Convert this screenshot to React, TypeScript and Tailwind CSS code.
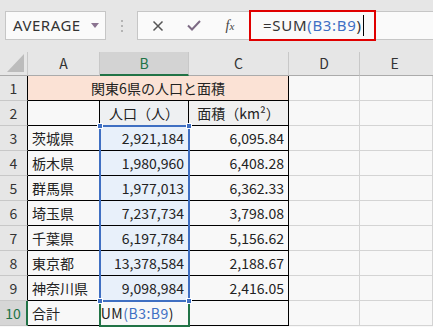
import React from "react";

const rows: [string, string, string][] = [
  ["茨城県", "2,921,184", "6,095.84"],
  ["栃木県", "1,980,960", "6,408.28"],
  ["群馬県", "1,977,013", "6,362.33"],
  ["埼玉県", "7,237,734", "3,798.08"],
  ["千葉県", "6,197,784", "5,156.62"],
  ["東京都", "13,378,584", "2,188.67"],
  ["神奈川県", "9,098,984", "2,416.05"],
];

const font = { fontFamily: '"Noto Sans CJK JP", "Noto Sans", sans-serif' };

function RowHead({ n, active }: { n: number; active?: boolean }) {
  return (
    <div
      className={
        "flex items-center justify-center border-b border-[#c8c8c8] text-[14px] " +
        (active
          ? "bg-[#d6d6d6] text-[#217346] border-r-2 border-r-[#217346]"
          : "bg-[#e6e6e6] text-[#333] border-r border-r-[#000]")
      }
    >
      {n}
    </div>
  );
}

function Cell({
  children,
  align = "left",
  bg = "",
}: {
  children?: React.ReactNode;
  align?: "left" | "right" | "center";
  bg?: string;
}) {
  const a =
    align === "right" ? "justify-end pr-[4px]" : align === "center" ? "justify-center" : "justify-start pl-[4px]";
  return (
    <div className={"flex items-center border-r border-b border-black text-[14px] text-[#222] overflow-hidden whitespace-nowrap " + a + " " + bg}>
      {children}
    </div>
  );
}

function Empty() {
  return <div className="border-r border-b border-[#d4d4d4] bg-[#f8f8f8]" />;
}

export default function App() {
  return (
    <div className="w-[433px] h-[327px] overflow-hidden bg-[#f8f8f8]" style={font}>
      {/* toolbar */}
      <div className="h-[52px] bg-[#e6e6e6] flex items-start pt-[11px] pl-[5px]">
        <div className="w-[101px] h-[29px] bg-[#fafafa] border border-[#c6c6c6] flex items-center pl-[7px] pr-[6px] justify-between">
          <span className="text-[15px] text-[#333] tracking-[0.5px]" style={{ fontFamily: '"Noto Sans", sans-serif' }}>AVERAGE</span>
          <svg width="8" height="5" viewBox="0 0 8 5">
            <path d="M0 0 L8 0 L4 5 Z" fill="#8a7390" />
          </svg>
        </div>
        <div className="w-[31px] h-[29px] flex flex-col items-center justify-center gap-[3px]">
          <div className="w-[2px] h-[2px] bg-[#b4b4b4]" />
          <div className="w-[2px] h-[2px] bg-[#b4b4b4]" />
          <div className="w-[2px] h-[2px] bg-[#b4b4b4]" />
        </div>
        <div className="flex-1 h-[29px] bg-[#fafafa] border border-[#c6c6c6] border-r-0 flex items-center relative">
          <div className="w-[111px] flex items-center">
            <div className="w-[38px] flex justify-center pl-[2px]">
              <svg width="12" height="12" viewBox="0 0 12 12">
                <path d="M1.5 1.5 L10.5 10.5 M10.5 1.5 L1.5 10.5" stroke="#555" strokeWidth="1.5" />
              </svg>
            </div>
            <div className="w-[36px] flex justify-center">
              <svg width="14" height="11" viewBox="0 0 14 11">
                <path d="M1 5.5 L5 9.5 L13 1" stroke="#7d6a84" strokeWidth="2" fill="none" />
              </svg>
            </div>
            <div className="w-[36px] flex justify-center">
              <span className="text-[14px] italic text-[#444]" style={{ fontFamily: '"Liberation Serif", serif' }}>
                f<span className="text-[11px]">x</span>
              </span>
            </div>
          </div>
          <div className="absolute left-[111px] top-[-2px] w-[127px] h-[31px] border-2 border-[#e00000] flex items-center pl-[12px]">
            <span className="text-[15px] text-[#333] tracking-[0.7px]" style={{ fontFamily: '"Noto Sans", sans-serif' }}>
              =SUM<span className="text-[#3e6fc4]">(B3:B9</span>)
            </span>
            <div className="w-[1px] h-[21px] bg-black ml-[1px]" />
          </div>
        </div>
      </div>

      {/* sheet */}
      <div className="relative grid grid-cols-[28px_72px_89px_100px_71px_1fr] grid-rows-[24px_repeat(10,25px)]">
        {/* header row */}
        <div className="bg-[#e6e6e6] border-r border-[#c8c8c8] border-b border-b-[#ababab] flex items-end justify-end pr-[3px] pb-[3px]">
          <svg width="17" height="18" viewBox="0 0 17 18">
            <path d="M17 0 L17 18 L0 18 Z" fill="#bcbcbc" />
          </svg>
        </div>
        <div className="bg-[#e6e6e6] border-r border-[#c8c8c8] border-b border-b-[#ababab] flex items-center justify-center text-[14px] text-[#333]">A</div>
        <div className="bg-[#d3d3d3] border-r border-[#c8c8c8] border-b-2 border-b-[#217346] flex items-center justify-center text-[14px] text-[#217346]">B</div>
        <div className="bg-[#e6e6e6] border-r border-[#c8c8c8] border-b border-b-[#ababab] flex items-center justify-center text-[14px] text-[#333]">C</div>
        <div className="bg-[#e6e6e6] border-r border-[#c8c8c8] border-b border-b-[#ababab] flex items-center justify-center text-[14px] text-[#333]">D</div>
        <div className="bg-[#e6e6e6] border-b border-b-[#ababab] flex items-center justify-center text-[14px] text-[#333] pr-[4px]">E</div>

        {/* row 1 */}
        <RowHead n={1} />
        <div className="col-span-3 flex items-center justify-center border-r border-b border-black bg-[#fbe2d5] text-[14px] text-[#222]">
          関東6県の人口と面積
        </div>
        <Empty />
        <Empty />

        {/* row 2 */}
        <RowHead n={2} />
        <Cell bg="bg-[#f8f8f8]" />
        <Cell align="center" bg="bg-[#eef0f2]">人口（人）</Cell>
        <Cell align="center" bg="bg-[#f0f0f0]">面積（km²）</Cell>
        <Empty />
        <Empty />

        {rows.map((r, i) => (
          <React.Fragment key={i}>
            <RowHead n={i + 3} />
            <Cell bg="bg-[#f8f8f8]">{r[0]}</Cell>
            <Cell align="right" bg="bg-[#e8f0fa]">{r[1]}</Cell>
            <Cell align="right" bg="bg-[#f8f8f8]">{r[2]}</Cell>
            <Empty />
            <Empty />
          </React.Fragment>
        ))}

        {/* row 10 */}
        <RowHead n={10} active />
        <Cell bg="bg-[#f8f8f8]">合計</Cell>
        <Cell align="right" bg="bg-[#f8f8f8]">
          <span className="pr-[10px] tracking-[0.5px]">
            =SUM<span className="text-[#3e6fc4]">(B3:B9</span>)
          </span>
        </Cell>
        <Cell bg="bg-[#f8f8f8]" />
        <Empty />
        <Empty />

        {/* active cell B10 */}
        <div className="absolute left-[99px] top-[248px] w-[91px] h-[27px] border-2 border-[#217346] pointer-events-none" />
        {/* selection B3:B9 */}
        <div className="absolute left-[99px] top-[73px] w-[91px] h-[177px] border-2 border-[#3f6fc2] pointer-events-none" />
        {[
          "left-[97px] top-[71px]",
          "left-[186px] top-[71px]",
          "left-[97px] top-[246px]",
          "left-[186px] top-[246px]",
        ].map((p, i) => (
          <div key={i} className={"absolute w-[6px] h-[6px] bg-[#3f6fc2] border border-white " + p} />
        ))}
      </div>
    </div>
  );
}
